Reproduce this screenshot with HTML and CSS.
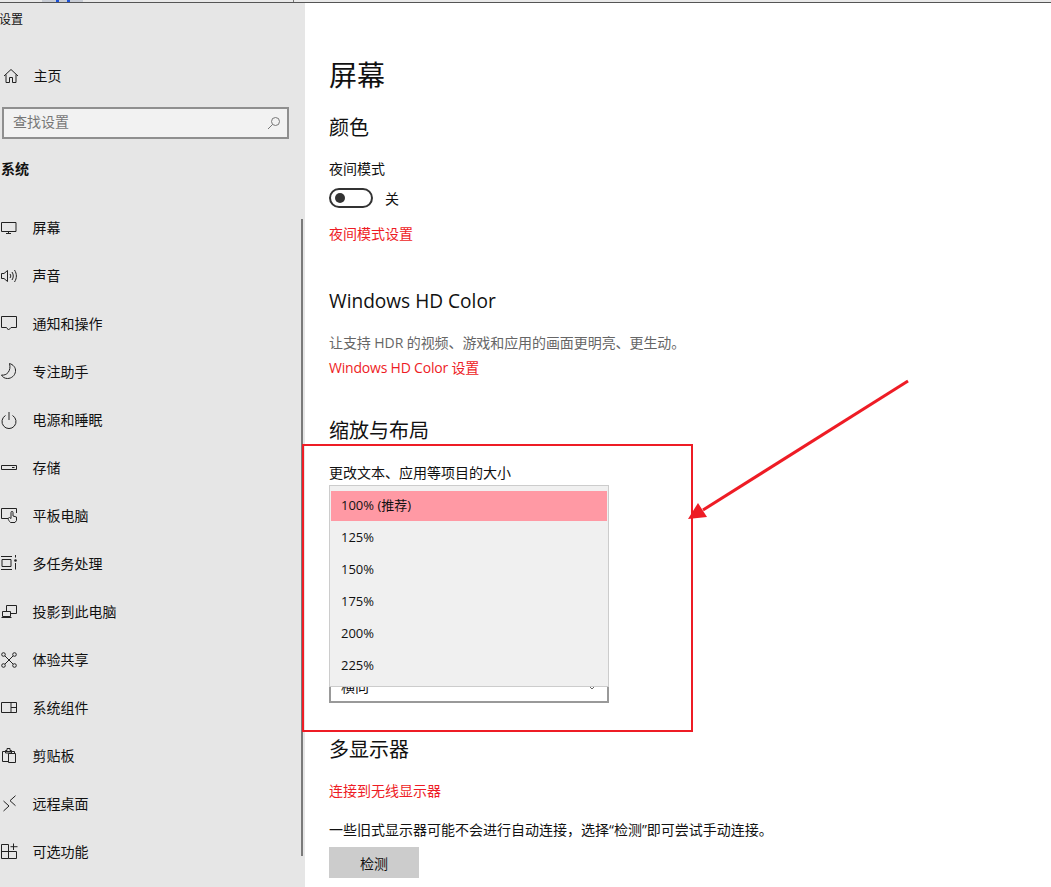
FILE: index.html
```html
<!DOCTYPE html>
<html lang="zh-CN">
<head>
<meta charset="utf-8">
<title>设置</title>
<link rel="stylesheet" href="styles.css">
</head>
<body>
<div class="topstrip"><span class="tab"><i></i><i></i></span><span class="tick"></span></div>
<div class="app">
  <aside class="sidebar">
    <div class="apptitle">设置</div>
    <div class="home">
      <svg class="ico" viewBox="0 0 18 18"><path d="M3 9 10 2.500 17 9M5 7.500V15.500H8.500V10.500H11.500V15.500H15V7.500"/></svg>
      <span>主页</span>
    </div>
    <div class="search">
      <span>查找设置</span>
      <svg class="sico" viewBox="0 0 14 14"><circle cx="8.500" cy="5.500" r="4"/><path d="M5.500 8.500 1 13"/></svg>
    </div>
    <div class="group">系统</div>
    <nav class="nav">
      <div class="item"><svg class="ico" viewBox="0 0 18 18"><path d="M.5 3.500H15V12.500H.5ZM7.500 12.500V14.500M5 14.500H10"/></svg><span>屏幕</span></div>
      <div class="item"><svg class="ico" viewBox="0 0 18 18"><path d="M.5 6.500H3L6.500 3.500V14.500L3 11.500H.5ZM9 7C10 8.500 10 9.500 9 11M11 5C12.700 7.500 12.700 10.500 11 13M13.500 3C16 7 16 11 13.500 15"/></svg><span>声音</span></div>
      <div class="item"><svg class="ico" viewBox="0 0 18 18"><path d="M.5 1.500H15.500V12.500H10L7.500 15 5.500 12.500H.5Z"/></svg><span>通知和操作</span></div>
      <div class="item"><svg class="ico" viewBox="0 0 18 18"><path d="M8.500 .5C12 1.500 15 4.500 14.500 8.500 14 12.500 10.500 15.500 6.500 15.500 3.500 15.500 1.500 14 .5 12 5.500 13 10.500 8 8.500 .5Z"/></svg><span>专注助手</span></div>
      <div class="item"><svg class="ico" viewBox="0 0 18 18"><path d="M4.500 4.500A7 7 0 1 0 11.500 4.500M8 1V9"/></svg><span>电源和睡眠</span></div>
      <div class="item"><svg class="ico" viewBox="0 0 18 18"><path d="M.5 6.500H15.500V10.500H.5ZM11 8.500H13.500"/></svg><span>存储</span></div>
      <div class="item"><svg class="ico" viewBox="0 0 18 18"><path d="M7 11.500H.5V1.500H15.500V6M9.500 15.500C8 14 7.500 13 7 11.500L8.500 10.500 10 11.500V5.500C10 4 12 4 12 5.500V9L15.500 10V13.500L14 15.500Z"/></svg><span>平板电脑</span></div>
      <div class="item"><svg class="ico" viewBox="0 0 18 18"><path d="M0 1.500H11M1 4.500H10V11.500H1ZM0 14.500H11M14.500 0V2.500M14.500 8V14.500"/><circle class="fill" cx="14.500" cy="5.500" r="1.300"/></svg><span>多任务处理</span></div>
      <div class="item"><svg class="ico" viewBox="0 0 18 18"><path d="M5.500 8V2.500H15.500V10.500H10M1.500 8.500H9.500V13.500H1.500ZM.5 14.500H10.500"/></svg><span>投影到此电脑</span></div>
      <div class="item"><svg class="ico" viewBox="0 0 18 18"><circle cx="2.500" cy="3.500" r="1.800"/><circle cx="13.500" cy="3.500" r="1.800"/><circle cx="2.500" cy="14.500" r="1.800"/><circle cx="13.500" cy="14.500" r="1.800"/><path d="M4 5 12 13M12 5 4 13"/></svg><span>体验共享</span></div>
      <div class="item"><svg class="ico" viewBox="0 0 18 18"><path d="M.5 3.500H15.500V13.500H.5ZM10 3.500V13.500M10 8.500H15.500"/></svg><span>系统组件</span></div>
      <div class="item"><svg class="ico" viewBox="0 0 18 18"><path d="M7 14.500H1.500V4.500H13.500V6.500M7.500 6.500H14.500V15.500H7.500ZM4.500 6V3.500H6V1.500H9V3.500H10.500V6Z"/></svg><span>剪贴板</span></div>
      <div class="item"><svg class="ico" viewBox="0 0 18 18"><path d="M2.500 6 8 11 2.500 16M14.500 .7 9 5.700 14.500 10.700"/></svg><span>远程桌面</span></div>
      <div class="item"><svg class="ico" viewBox="0 0 18 18"><path d="M.5 1.500H7.500V15.500H.5ZM.5 8.500H15.500V15.500H7.500M12.500 .5V7M9.500 3.700H16.500"/></svg><span>可选功能</span></div>
    </nav>
  </aside>
  <main class="main">
    <h1 class="title">屏幕</h1>
    <h2 class="h2 h-color">颜色</h2>
    <div class="line l-night">夜间模式</div>
    <div class="toggle-row"><span class="toggle"><b></b></span><span>关</span></div>
    <a class="link l-nightset">夜间模式设置</a>
    <h2 class="h2 h-hd">Windows HD Color</h2>
    <div class="line desc">让支持 HDR 的视频、游戏和应用的画面更明亮、更生动。</div>
    <a class="link l-hd">Windows HD Color 设置</a>
    <h2 class="h2 h-scale">缩放与布局</h2>
    <div class="line l-size">更改文本、应用等项目的大小</div>
    <div class="selectwrap">
      <div class="select"><span>横向</span><svg class="chev" viewBox="0 0 8 5"><path d="M.5 .5 4 4 7.500 .5"/></svg></div>
      <div class="flyout">
        <div class="opt on">100% (推荐)</div>
        <div class="opt">125%</div>
        <div class="opt">150%</div>
        <div class="opt">175%</div>
        <div class="opt">200%</div>
        <div class="opt">225%</div>
      </div>
    </div>
    <h2 class="h2 h-multi">多显示器</h2>
    <a class="link l-wireless">连接到无线显示器</a>
    <div class="line l-old">一些旧式显示器可能不会进行自动连接，选择“检测”即可尝试手动连接。</div>
    <button class="btn">检测</button>
  </main>
</div>
<div class="scrollbar"></div>
<div class="redbox"></div>
<svg class="arrow" viewBox="0 0 230 150"><path class="shaft" d="M220 2 15 131"/><path class="head" d="M0 140 10 124 19 138Z"/></svg>
</body>
</html>
```
FILE: styles.css
```css
* { box-sizing: border-box; }
html, body { margin: 0; padding: 0; }
body {
  width: 1051px; height: 887px; overflow: hidden; position: relative;
  background: #fff; color: #111;
  font-family: "Open Sans", "Noto Sans CJK SC", sans-serif;
  font-size: 14px;
}
.topstrip { height: 3px; background: #e9e9e9; border-bottom: 1px solid #555; display: flex; position: relative; }
.tab { margin-left: 42px; width: 41px; height: 2px; background: #c8ccd4; display: flex; gap: 8px; padding-left: 14px; }
.tab i { width: 3px; height: 2px; background: #1a50d8; }
.tick { width: 1px; height: 2px; margin-left: 210px; background: #777; }
.app { display: flex; height: 884px; }
.sidebar { width: 305px; flex: none; background: #e6e6e6; }
.apptitle { font-size: 12px; line-height: 18px; margin: 8px 0 0 -1px; }
.home { display: flex; align-items: center; height: 24px; margin-top: 35px; }
.ico { width: 18px; height: 18px; flex: none; margin-left: 1px; margin-right: 13.500px; fill: none; stroke: #222; stroke-width: 1; }
.ico .fill { fill: #222; stroke: none; }
.home .ico { margin-right: 14.500px; }
.home span, .item span { margin-bottom: 2px; }
.search {
  margin: 19px 0 0 2px; width: 287px; height: 32px; border: 2px solid #8f8f8f; background: #f2f2f2;
  display: flex; align-items: center; justify-content: space-between; padding: 0 6px 0 9px; color: #777;
}
.search span { margin-bottom: 4px; }
.sico { width: 14px; height: 14px; fill: none; stroke: #777; stroke-width: 1; }
.group { font-weight: 700; line-height: 20px; margin-top: 20px; margin-left: 1px; }
.nav { margin-top: 25px; }
.item { display: flex; align-items: center; height: 48px; }
.main { flex: 1; padding-left: 24px; }
.title { font-size: 28px; font-weight: 400; line-height: 40px; margin: 52px 0 0; }
.h2 { font-size: 20px; font-weight: 400; line-height: 28px; margin: 0; }
.line { line-height: 20px; }
.link { display: block; line-height: 20px; color: #ee1c25; }
.h-color { margin-top: 19px; }
.l-night { margin-top: 17px; }
.toggle-row { display: flex; align-items: center; gap: 12px; margin-top: 9px; height: 20px; }
.toggle { width: 44px; height: 20px; border: 2px solid #333; border-radius: 10px; padding: 3px; display: block; }
.toggle b { display: block; width: 10px; height: 10px; margin-left: 1px; border-radius: 50%; background: #333; }
.l-nightset { margin-top: 16px; }
.h-hd { margin-top: 43px; font-size: 19.100px; }
.desc { margin-top: 18px; color: #666; letter-spacing: -.08px; }
.l-hd { margin-top: 5px; letter-spacing: -.2px; }
.h-scale { margin-top: 39px; }
.l-size { margin-top: 18px; }
.selectwrap { position: relative; width: 280px; height: 218px; margin-top: 2px; display: flex; flex-direction: column; justify-content: flex-end; }
.select { height: 32px; border: 2px solid #999; border-top: 0; display: flex; align-items: flex-end; justify-content: space-between; padding: 0 11px 5px 10px; }
.chev { width: 8px; height: 5px; margin-bottom: 6px; fill: none; stroke: #666; stroke-width: 1; }
.flyout { position: absolute; left: 0; top: 0; width: 280px; height: 202px; background: #f0f0f0; border: 1px solid #ccc; padding: 5px 1px; }
.opt { height: 32px; line-height: 32px; padding-left: 10px; font-size: 13px; }
.opt.on { height: 30px; line-height: 28px; background: #ff99a4; }
.h-multi { margin-top: 33px; }
.l-wireless { margin-top: 17px; }
.l-old { margin-top: 19px; }
.btn { display: block; margin-top: 7px; width: 90px; height: 31px; background: #ccc; border: 0; padding: 0; font: inherit; color: #111; }
.scrollbar { position: absolute; left: 301px; top: 219px; width: 2px; height: 637px; background: #7a7a7a; }
.redbox { position: absolute; left: 302px; top: 444px; width: 391px; height: 288px; border: 2px solid #ee1c25; }
.arrow { position: absolute; left: 688px; top: 379px; width: 230px; height: 150px; overflow: visible; }
.shaft { fill: none; stroke: #ee1c25; stroke-width: 3; }
.head { fill: #ee1c25; }
```
